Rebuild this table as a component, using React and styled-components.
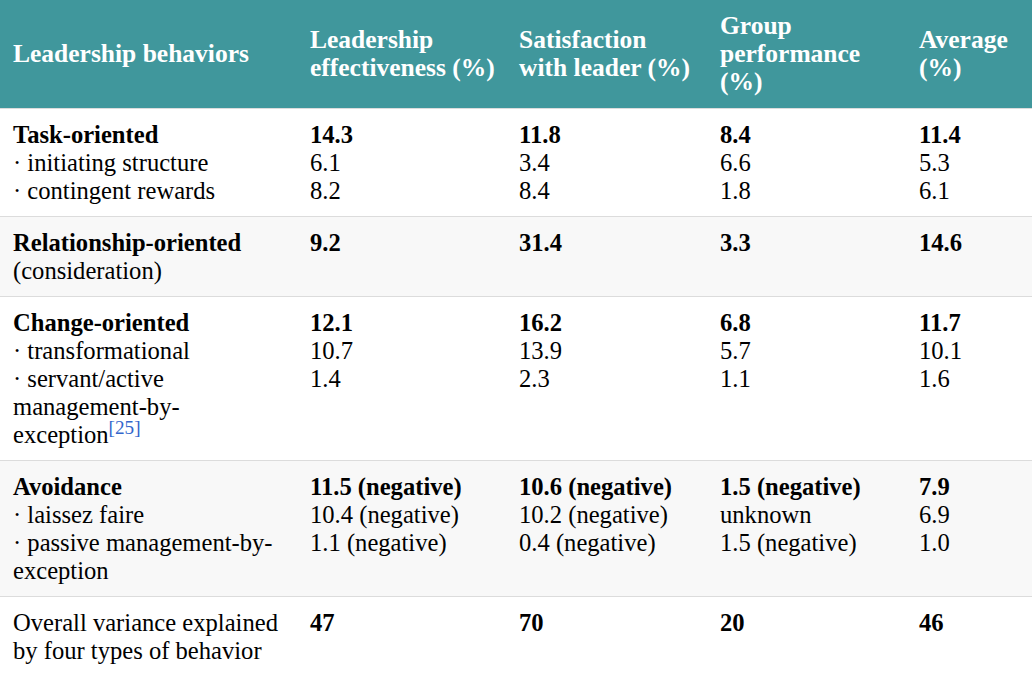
import styled, { createGlobalStyle } from "styled-components"

const GlobalStyle = createGlobalStyle`
  html, body {
    margin: 0;
    padding: 0;
    background: #fff;
  }
  body {
    font-family: "Liberation Serif", "Times New Roman", serif;
    color: #000;
  }
`

const Table = styled.table`
  width: 1032px;
  border-collapse: collapse;
  table-layout: fixed;
  font-family: "Liberation Serif", "Times New Roman", serif;
  font-size: 24.6px;
  line-height: 28px;
  color: #000;
`

const HeadCell = styled.th`
  background-color: #40979c;
  color: #fff;
  font-size: 25.5px;
  font-weight: 700;
  text-align: left;
  vertical-align: middle;
  padding: 12px 8px 12px 13px;
  height: 83px;
  border-bottom: 1px solid #dcdcdc;
`

const Row = styled.tr`
  background-color: ${({ $shade }) => ($shade ? "#f8f8f8" : "#fff")};
  border-bottom: ${({ $last }) => ($last ? "none" : "1px solid #dcdcdc")};
`

const Cell = styled.td`
  vertical-align: top;
  padding: 12px 8px 11px 13px;
`

const Line = styled.div`
  font-weight: ${({ $bold }) => ($bold ? 700 : 400)};
`

const Ref = styled.sup`
  font-size: 0.78em;
  line-height: 0;
  vertical-align: baseline;
  position: relative;
  top: -0.45em;
  color: #3366cc;
`

const columns = [
  { label: "Leadership behaviors", width: 297 },
  { label: "Leadership effectiveness (%)", width: 209 },
  { label: "Satisfaction with leader (%)", width: 201 },
  { label: "Group performance (%)", width: 199 },
  { label: "Average (%)", width: 126 },
]

const rows = [
  {
    head: [
      { text: "Task-oriented", bold: true },
      { text: "· initiating structure" },
      { text: "· contingent rewards" },
    ],
    values: [
      ["14.3", "6.1", "8.2"],
      ["11.8", "3.4", "8.4"],
      ["8.4", "6.6", "1.8"],
      ["11.4", "5.3", "6.1"],
    ],
  },
  {
    head: [
      { text: "Relationship-oriented", bold: true },
      { text: "(consideration)" },
    ],
    values: [["9.2"], ["31.4"], ["3.3"], ["14.6"]],
  },
  {
    head: [
      { text: "Change-oriented", bold: true },
      { text: "· transformational" },
      { text: "· servant/active management-by-exception", ref: "[25]" },
    ],
    values: [
      ["12.1", "10.7", "1.4"],
      ["16.2", "13.9", "2.3"],
      ["6.8", "5.7", "1.1"],
      ["11.7", "10.1", "1.6"],
    ],
  },
  {
    head: [
      { text: "Avoidance", bold: true },
      { text: "· laissez faire" },
      { text: "· passive management-by-exception" },
    ],
    values: [
      ["11.5 (negative)", "10.4 (negative)", "1.1 (negative)"],
      ["10.6 (negative)", "10.2 (negative)", "0.4 (negative)"],
      ["1.5 (negative)", "unknown", "1.5 (negative)"],
      ["7.9", "6.9", "1.0"],
    ],
  },
]

export default function App() {
  return (
    <>
      <GlobalStyle />
      <Table>
        <colgroup>
          {columns.map((c) => (
            <col key={c.label} style={{ width: c.width }} />
          ))}
        </colgroup>
        <thead>
          <tr>
            {columns.map((c) => (
              <HeadCell key={c.label}>{c.label}</HeadCell>
            ))}
          </tr>
        </thead>
        <tbody>
          {rows.map((row, i) => (
            <Row key={i} $shade={i % 2 === 1}>
              <Cell>
                {row.head.map((h) => (
                  <Line key={h.text} $bold={h.bold}>
                    {h.text}
                    {h.ref && <Ref>{h.ref}</Ref>}
                  </Line>
                ))}
              </Cell>
              {row.values.map((col, j) => (
                <Cell key={j}>
                  {col.map((v, k) => (
                    <Line key={k} $bold={k === 0}>
                      {v}
                    </Line>
                  ))}
                </Cell>
              ))}
            </Row>
          ))}
          <Row $last>
            <Cell>Overall variance explained by four types of behavior</Cell>
            {["47", "70", "20", "46"].map((v) => (
              <Cell key={v}>
                <Line $bold>{v}</Line>
              </Cell>
            ))}
          </Row>
        </tbody>
      </Table>
    </>
  )
}
